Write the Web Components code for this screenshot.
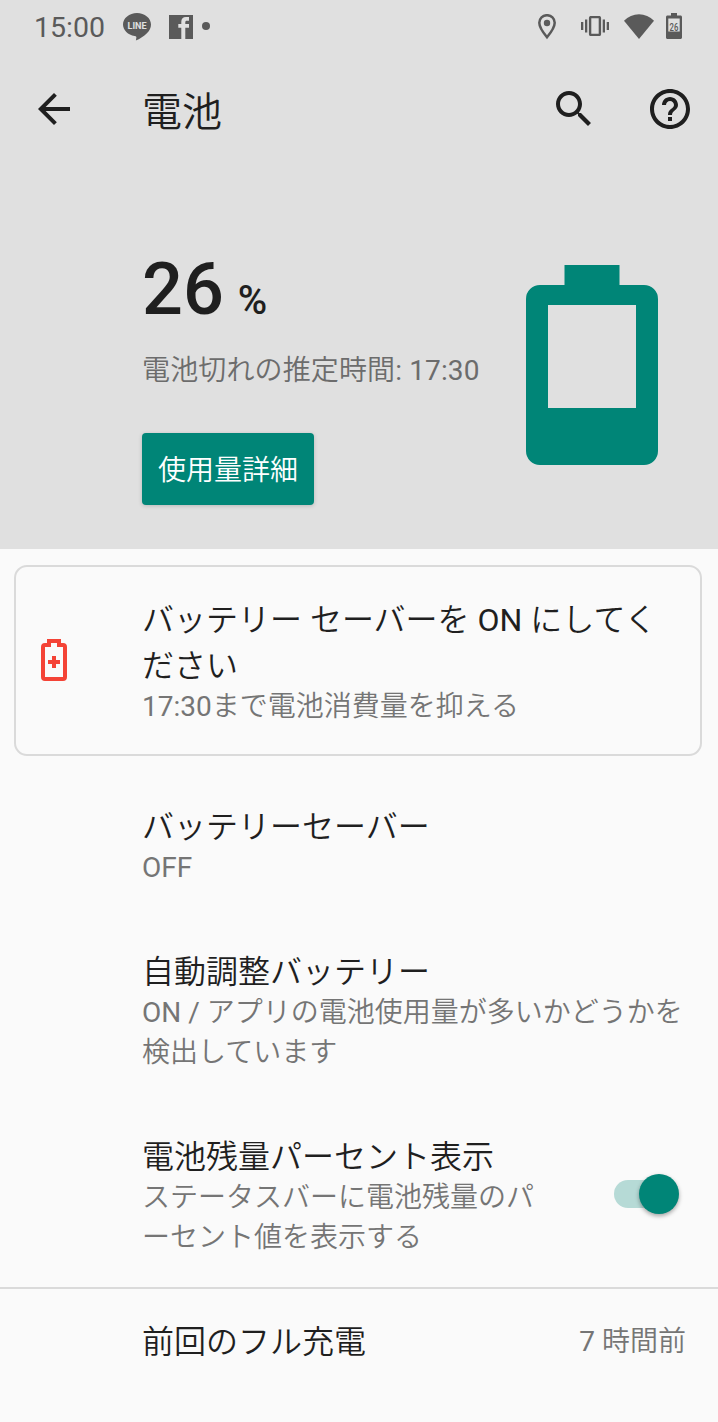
<!DOCTYPE html>
<html lang="ja">
<head>
<meta charset="utf-8">
<title>電池</title>
<style>
    body {
        margin: 0;
        background: #fafafa;
        color: #1f1f1f;
        font-family: Roboto, "Noto Sans CJK JP DemiLight", "Noto Sans CJK JP", sans-serif;
        --accent: #008577;
        --header: #e0e0e0;
        --secondary: #757575;
        --line: #dadada;
    }
</style>
</head>
<body>
<battery-screen></battery-screen>

<script>
// Base común: cada componente define su template y sus estilos
class BaseComponent extends HTMLElement {
    constructor() {
        super();
        this.attachShadow({ mode: "open" });
    }

    connectedCallback() {
        this.render();
    }

    render() {
        const template = document.createElement("template");
        template.innerHTML = `<style>${this.getStyles()}</style>${this.getTemplate()}`;
        this.shadowRoot.replaceChildren(template.content.cloneNode(true));
    }
}

const ICONS = {
    line: {
        size: [28, 28],
        svg: `<path d="M14 0C6.3 0 0 5.2 0 11.6c0 5.7 5 10.5 11.6 11.4 1.8.3 2 .9 1.7 2.1l-.4 2.4c2.6-.8 7.600-3.800 11-7.200C26.700 17.600 28 14.900 28 11.600 28 5.200 21.700 0 14 0z"/>
            <text x="14" y="15.500" text-anchor="middle" font-size="9.800" font-weight="700" textLength="19" lengthAdjust="spacingAndGlyphs" fill="#e0e0e0">LINE</text>`
    },
    facebook: {
        size: [24, 24],
        svg: `<path d="M0 0h24v24h-7.700V12.700H20V9h-3.700V7.200c0-1 .5-1.500 1.500-1.500H20V2h-3c-3 0-4.700 1.700-4.700 4.700V9h-3v3.700h3V24H0z"/>`
    },
    dot: {
        size: [8, 8],
        svg: `<circle cx="4" cy="4" r="4"/>`
    },
    place: {
        size: [18, 26],
        svg: `<path d="M9 1.200c4.300 0 7.700 3.400 7.700 7.600C16.700 14 9 23.300 9 23.300S1.300 14 1.300 8.800C1.300 4.600 4.700 1.200 9 1.200z" fill="none" stroke="currentColor" stroke-width="2.500"/><circle cx="9" cy="9" r="3.200"/>`
    },
    vibrate: {
        size: [28, 20],
        svg: `<path d="M0 6h2.300v8H0zM4 3.500h2.300v13H4zM21.700 3.500H24v13h-2.300zM25.700 6H28v8h-2.300z"/><rect x="9.100" y="1.100" width="9.800" height="17.800" rx="1" fill="none" stroke="currentColor" stroke-width="2.400"/>`
    },
    wifi: {
        size: [30, 25],
        svg: `<path d="M0 6.700C4.100 2.600 9.300.3 15 .3s10.900 2.300 15 6.400L15 25z"/>`
    },
    batterySmall: {
        size: [16, 26],
        svg: `<path fill-rule="evenodd" d="M5 0h6v2.500h3.500c.8 0 1.500.7 1.500 1.500v20.500c0 .8-.7 1.500-1.500 1.500h-13C.7 26 0 25.300 0 24.500V4c0-.8.7-1.500 1.500-1.500H5zM2.300 5.500V18.500h11.400V5.500z"/>
            <text x="8" y="18.300" text-anchor="middle" font-size="11.500" font-weight="500" textLength="8.800" lengthAdjust="spacingAndGlyphs">26</text>`
    },
    back: {
        size: [48, 48],
        box: "0 0 24 24",
        svg: `<path d="M20 11H7.830l5.590-5.590L12 4l-8 8 8 8 1.410-1.410L7.830 13H20z"/>`
    },
    search: {
        size: [48, 48],
        box: "0 0 24 24",
        svg: `<path d="M15.500 14h-.79l-.28-.27C15.410 12.590 16 11.110 16 9.500 16 5.910 13.090 3 9.500 3S3 5.910 3 9.500 5.910 16 9.500 16c1.610 0 3.090-.59 4.230-1.570l.27.28v.79l5 4.990L20.490 19l-4.990-5zm-6 0C7.010 14 5 11.990 5 9.500S7.010 5 9.500 5 14 7.010 14 9.500 11.990 14 9.500 14z"/>`
    },
    help: {
        size: [48, 48],
        box: "0 0 24 24",
        svg: `<path d="M11 16h2v2h-2zM12 2C6.480 2 2 6.480 2 12s4.480 10 10 10 10-4.480 10-10S17.520 2 12 2zm0 18c-4.410 0-8-3.590-8-8s3.590-8 8-8 8 3.590 8 8-3.590 8-8 8zm0-14c-2.210 0-4 1.790-4 4h2c0-1.100.9-2 2-2s2 .9 2 2c0 2-3 1.750-3 5h2c0-2.250 3-2.500 3-5 0-2.210-1.790-4-4-4z"/>`
    },
    batteryLarge: {
        size: [132, 200],
        svg: `<path fill-rule="evenodd" d="M38.500 0h55v20H118a14 14 0 0 1 14 14v152a14 14 0 0 1-14 14H14a14 14 0 0 1-14-14V34a14 14 0 0 1 14-14h24.500zM22 40v103h88V40z"/>`
    },
    batteryPlus: {
        size: [26, 42],
        svg: `<path fill-rule="evenodd" d="M6 0h14v4h2a4 4 0 0 1 4 4v30a4 4 0 0 1-4 4H4a4 4 0 0 1-4-4V8a4 4 0 0 1 4-4h2zM10 4v4H4v30h18V8h-6V4z"/><path d="M11 17h4v4h4v4h-4v4h-4v-4H7v-4h4z"/>`
    }
};

class AppIcon extends BaseComponent {
    getTemplate() {
        const icon = ICONS[this.getAttribute("name")];
        const [w, h] = icon.size;
        return `<svg width="${w}" height="${h}" viewBox="${icon.box || `0 0 ${w} ${h}`}" fill="currentColor" aria-hidden="true">${icon.svg}</svg>`;
    }

    getStyles() {
        return `
            :host { display: block; flex: none; }
            svg { display: block; }
        `;
    }
}

class StatusBar extends BaseComponent {
    getTemplate() {
        return `
            <time>15:00</time>
            <app-icon name="line"></app-icon>
            <app-icon name="facebook"></app-icon>
            <app-icon name="dot"></app-icon>
            <div class="system">
                <app-icon name="place"></app-icon>
                <app-icon name="vibrate"></app-icon>
                <app-icon name="wifi"></app-icon>
                <app-icon name="batterySmall"></app-icon>
            </div>
        `;
    }

    getStyles() {
        return `
            :host {
                display: flex;
                align-items: center;
                height: 52px;
                padding: 0 36px 0 34px;
                box-sizing: border-box;
                color: #5a5a5a;
            }
            time { width: 71px; margin-right: 18px; font-size: 28.500px; line-height: 34px; padding-top: 4px; }
            [name="line"] { margin-top: 2px; }
            [name="facebook"] { margin: 2px 9px 0 18px; }
            .system { display: flex; align-items: center; margin-left: auto; }
            [name="place"] { margin-top: 1px; }
            [name="vibrate"] { margin: 0 15px 0 25px; }
            [name="batterySmall"] { margin-left: 12px; }
        `;
    }
}

class AppToolbar extends BaseComponent {
    getTemplate() {
        return `
            <app-icon name="back"></app-icon>
            <h1><slot></slot></h1>
            <app-icon name="search"></app-icon>
            <app-icon name="help"></app-icon>
        `;
    }

    getStyles() {
        return `
            :host {
                display: flex;
                align-items: center;
                gap: 48px;
                height: 114px;
                padding: 0 24px 0 30px;
                box-sizing: border-box;
            }
            h1 { flex: 1; margin: 0 0 0 16px; padding-top: 8px; font-size: 40px; font-weight: 400; line-height: 56px; }
        `;
    }
}

class BatterySummary extends BaseComponent {
    getTemplate() {
        return `
            <div>
                <div class="level">${this.getAttribute("level")}<small>%</small></div>
                <p><slot></slot></p>
                <button><slot name="action"></slot></button>
            </div>
            <app-icon name="batteryLarge"></app-icon>
        `;
    }

    getStyles() {
        return `
            :host {
                display: flex;
                justify-content: space-between;
                height: 383px;
                padding: 82px 60px 0 142px;
                box-sizing: border-box;
            }
            .level { height: 84px; font-size: 72px; font-weight: 500; line-height: 84px; }
            small { margin-left: 14px; font-size: 40px; line-height: 1; }
            p { margin: 19px 0 42px; color: #6c6c6c; font-size: 28px; line-height: 40px; letter-spacing: .13px; white-space: nowrap; }
            button {
                display: block;
                width: 172px;
                height: 72px;
                padding: 3px 0 0;
                border: 0;
                border-radius: 4px;
                background: var(--accent);
                box-shadow: 0 1px 4px rgba(0, 0, 0, .18);
                color: #fff;
                font: inherit;
                font-size: 28px;
                line-height: 69px;
            }
            app-icon { margin-top: 17px; color: var(--accent); }
        `;
    }
}

class PreferenceRow extends BaseComponent {
    getTemplate() {
        return `
            <div class="icon"><slot name="icon"></slot></div>
            <div class="text">
                <div class="title"><slot></slot></div>
                <div class="summary"><slot name="summary"></slot></div>
            </div>
            <slot name="widget"></slot>
        `;
    }

    getStyles() {
        return `
            :host {
                display: flex;
                align-items: center;
                padding: 31px 32px 30px 0;
            }
            :host([card]) {
                margin: 16px 16px 17px 14px;
                padding: 30px 0 27px;
                border: 2px solid var(--line);
                border-radius: 13px;
            }
            :host([divided]) { border-top: 2px solid var(--line); margin-top: -1px; padding-top: 30px; }
            .icon { width: 142px; flex: none; }
            :host([card]) .icon { width: 101px; padding: 0 0 4px 25px; color: #f44336; }
            .text { flex: 1; white-space: nowrap; }
            .title { font-size: 32px; line-height: 46px; }
            .summary { margin-top: -2px; color: var(--secondary); font-size: 28px; line-height: 40px; }
            :host([single]) .summary { display: none; }
            ::slotted(.value) { color: var(--secondary); font-size: 28px; line-height: 40px; }
        `;
    }
}

class ToggleSwitch extends BaseComponent {
    getTemplate() {
        return `<span class="track"></span><span class="thumb"></span>`;
    }

    getStyles() {
        return `
            :host {
                display: flex;
                align-items: center;
                margin: 0 7px 5px 0;
            }
            .track {
                width: 50px;
                height: 28px;
                margin-right: -25px;
                border-radius: 14px;
                background: #b6dad6;
            }
            .thumb {
                width: 40px;
                height: 40px;
                border-radius: 50%;
                background: var(--accent);
                box-shadow: 0 2px 4px rgba(0, 0, 0, .35);
            }
        `;
    }
}

class BatteryScreen extends BaseComponent {
    getTemplate() {
        return `
            <header>
                <status-bar></status-bar>
                <app-toolbar>電池</app-toolbar>
                <battery-summary level="26">電池切れの推定時間: 17:30<span slot="action">使用量詳細</span></battery-summary>
            </header>
            <main>
                <preference-row card>
                    <app-icon slot="icon" name="batteryPlus"></app-icon>
                    バッテリー セーバーを ON にしてく<br>ださい
                    <span slot="summary">17:30まで電池消費量を抑える</span>
                </preference-row>
                <preference-row>
                    バッテリーセーバー
                    <span slot="summary">OFF</span>
                </preference-row>
                <preference-row>
                    自動調整バッテリー
                    <span slot="summary">ON / アプリの電池使用量が多いかどうかを<br>検出しています</span>
                </preference-row>
                <preference-row>
                    電池残量パーセント表示
                    <span slot="summary">ステータスバーに電池残量のパ<br>ーセント値を表示する</span>
                    <toggle-switch slot="widget"></toggle-switch>
                </preference-row>
                <preference-row divided single>
                    前回のフル充電
                    <span slot="widget" class="value">7 時間前</span>
                </preference-row>
            </main>
        `;
    }

    getStyles() {
        return `
            :host { display: block; width: 718px; height: 1422px; overflow: hidden; }
            header { background: var(--header); }
            main { display: flex; flex-direction: column; }
        `;
    }
}

customElements.define("app-icon", AppIcon);
customElements.define("status-bar", StatusBar);
customElements.define("app-toolbar", AppToolbar);
customElements.define("battery-summary", BatterySummary);
customElements.define("preference-row", PreferenceRow);
customElements.define("toggle-switch", ToggleSwitch);
customElements.define("battery-screen", BatteryScreen);
</script>
</body>
</html>
